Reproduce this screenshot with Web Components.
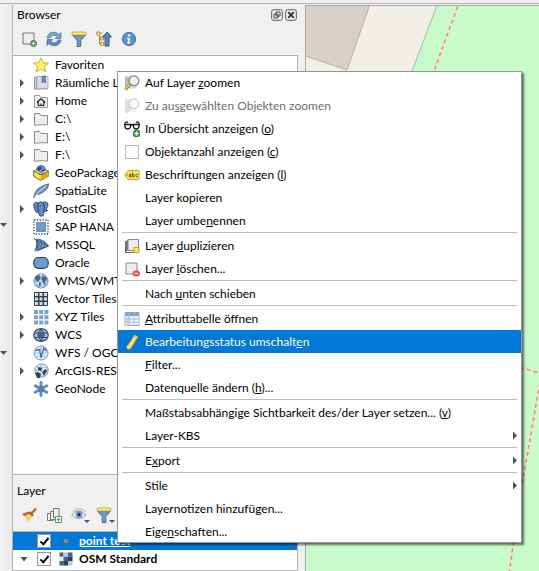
<!DOCTYPE html>
<html lang="de">
<head>
<meta charset="utf-8">
<title>QGIS – Layer-Kontextmenü</title>
<style>
  html, body { height: 100%; margin: 0; }
  body { font: 12px/18px Lato, "Open Sans", sans-serif; color: #000; background: #f0f0f0; overflow: hidden; }
</style>
</head>
<body>
<script>
const ICONS = {
  addLayer: '<path d="M2 2h11v11H2z" fill="#eee" stroke="#777"/><circle cx="12.500" cy="12.500" r="3" fill="#5b9b6a" stroke="#3f7d4e"/><path d="M12.500 10.700v3.600M10.700 12.500h3.600" stroke="#fff"/>',
  refresh: '<path d="M1 7C1.500 3 5 .8 8.500 1.300 10.500 1.500 12 2.500 13 3.500L15 1.500V7.500H9.200L11.200 5.400C8.500 3.200 5.200 4 4 7z" fill="#7ba8d3" stroke="#3e71a8" stroke-width=".7"/><path d="M15 9C14.500 13 11 15.200 7.500 14.700 5.500 14.500 4 13.500 3 12.500L1 14.500V8.500H6.800L4.800 10.600C7.500 12.800 10.800 12 12 9z" fill="#5b8dc3" stroke="#3e71a8" stroke-width=".7"/>',
  filter: '<path d="M1.500 4h13l-4.700 5.500v6H6.200v-6z" fill="#6d9acb" stroke="#466d98"/><rect x="1" y="1" width="14" height="3" rx="1" fill="#ffe95c" stroke="#b7a43c" stroke-width=".8"/>',
  collapse: '<path d="M2 2h4M3.500 2v11H6M3.500 7.500H6" stroke="#888" fill="none"/><path d="M.8 1h3v3h-3zM4.500 6h3v3h-3zM4.500 11.500h3v3h-3z" fill="#fbe0bd" stroke="#d98b2b"/><path d="M11 1l4.500 5H13v9H9V6H6.500z" fill="#5a87b8" stroke="#355f8e"/>',
  info: '<circle cx="8" cy="8" r="6.700" fill="#5c91c9" stroke="#4478ad"/><path d="M7 3.500h2.500L9 5.500H6.700zM6 7h3.200l-1 4.300h1.200l-.3 1.200H6.200l1-4.300H5.800z" fill="#fff"/>',
  star: '<path d="M8 .8l2.100 4.900 5.400.4-4.100 3.500 1.300 5.200L8 12l-4.700 2.800 1.300-5.200L.5 6.100l5.400-.4z" fill="#fff568" stroke="#d5ab20"/>',
  bookmark: '<path d="M1.500 2v12h1.800V2z" fill="#ddd" stroke="#999"/><path d="M4 1.500h11v12H4z" fill="#ddd" stroke="#b2b2b2"/><path d="M2 14h13" stroke="#aaa"/><path d="M9 1h3.500v7L10.700 6.500 9 8z" fill="#5d90c7" stroke="#3e6c9d" stroke-width=".6"/>',
  home: '<path d="M1.500 2.500h5l1.500 2h6.500v10h-13z" fill="#eee" stroke="#999"/><path d="M3.800 9.500L8 5.800l4.200 3.700M5.200 8.800v3.700h5.600V8.800M8 12.500v-2" fill="none" stroke="#222" stroke-width="1.200"/>',
  folder: '<path d="M1.500 2.500h5l1.500 2h6.500v9.500q-6.500-.8-13 .3z" fill="#eee" stroke="#8e8e8e"/>',
  geopackage: '<path d="M.7 6l7 3.500L15.300 6v5.300l-7.600 4.200-7-4.200z" fill="#ffe44c" stroke="#544a1a" stroke-width=".8"/><path d="M7.700 9.500v6l7.600-4.200V6z" fill="#d8a81d"/><circle cx="8" cy="5" r="4.500" fill="#6c9ccf" stroke="#294765" stroke-width=".8"/><path d="M4.500 3l3-1.500L9 3 7 5.500l-2-.5zM9 5l2-1 1 2-2 2z" fill="#27496c"/><path d="M.7 6l7 3.500 7.600-3.500-3-1-4.300 3-4.500-3z" fill="#fff1a0" stroke="#544a1a" stroke-width=".6"/>',
  feather: '<path d="M.7 15Q2 7 7 4.500 11 2 15.500.8 16 5 11 8.500 8 11 3.500 11.500z" fill="#6c9ccf" stroke="#304f70" stroke-width=".8"/><path d="M1 15Q5 8 13.500 2.500" fill="none" stroke="#dfeaf6" stroke-width=".9"/>',
  postgis: '<path d="M5 2Q1 0 .7 4 .8 9 3.500 11.500 5 12 5.500 10q0 4 1.500 5 3.500 1 3.800-2v-2.500Q12 11 14.800 9.500l-2-.5Q15.500 5 15 2.500 12-.5 9.500 1.300 7 0 5 2z" fill="#5f8fc2" stroke="#263f5a" stroke-width=".8"/><path d="M5 2.200Q4 7 5.500 10M10 1.500Q12.500 5 10.700 10.500M6.500 5h1M9 5h.8" fill="none" stroke="#263f5a"/>',
  saphana: '<path d="M3.500 3.500h9v9h-9z" fill="#6c9ccf" stroke="#42688f" stroke-width=".6"/><path d="M1 1h14v14H1z" fill="none" stroke="#2c445d" stroke-width="1.300" stroke-dasharray="1.300 1.500"/>',
  mssql: '<path d="M1 1.500Q5 5 1.500 13.500L4.500 12Q7 7 4.500 3z" fill="#456c96"/><path d="M4.500 2Q12 3 15.500 9L4 14Q7.500 8 4.500 2z" fill="#6c9ccf" stroke="#304f70" stroke-width=".7"/><path d="M1 1.500L15.500 9 1.500 14M7.500 3Q10 7 7.500 12M10.500 4Q12.500 7 10.500 11" fill="none" stroke="#304f70" stroke-width=".8"/>',
  oracle: '<rect x=".8" y="2.500" width="14.400" height="10.800" rx="4.500" fill="#6c9ccf" stroke="#2d4661" stroke-width="1.200"/>',
  globe: '<circle cx="8" cy="8" r="7" fill="#a6c4e4" stroke="#5d7da1"/><path d="M1.500 6.500Q8 9 14.500 6.500M1.500 10Q8 12 14.500 10M8 1Q3 8 8 15M8 1Q13 8 8 15" fill="none" stroke="#e5effa" stroke-width=".8"/><path d="M3 3l4-.6.5 3-2 3-2-.5L2 6zM6 9l2 1-.6 4-1.400-1zM9 3l4 1 1 3-2 1 .5 3-1.500 1-1.500-4-1-1z" fill="#43678f"/>',
  grid: '<path d="M1.500 1.500h13v13h-13z" fill="#fff" stroke="#2f3f50"/><path d="M2.500 2.500h3v3h-3zM6.700 2.500h3v3h-3zM11 2.500h3v3h-3zM2.500 6.700h3v3h-3zM6.700 6.700h3v3h-3zM11 6.700h3v3h-3zM2.500 11h3v3h-3zM6.700 11h3v3h-3zM11 11h3v3h-3z" fill="#cfdae6"/><path d="M5.800 1v14M10.200 1v14M1 5.800h14M1 10.200h14" stroke="#2f4052" stroke-width="1.500"/>',
  tiles: '<path d="M1 1h4v4H1zM6.200 1h4v4h-4zM11.400 1h4v4h-4zM1 6.200h4v4H1zM6.200 6.200h4v4h-4zM11.400 6.200h4v4h-4zM1 11.400h4v4H1zM6.200 11.400h4v4h-4zM11.400 11.400h4v4h-4z" fill="#78a4d3"/>',
  wcs: '<ellipse cx="8" cy="8" rx="7.200" ry="6.300" fill="#a6c4e4" stroke="#304a66" stroke-width="1.200"/><path d="M8 2v12M1 6h14M1 10.500h14M8 2Q2 8 8 14M8 2Q14 8 8 14" fill="none" stroke="#304a66"/><path d="M4.500 6h7v4.500h-7z" fill="#3e648e"/>',
  wfs: '<circle cx="8" cy="8" r="7" fill="#e3edf8" stroke="#7896b6"/><path d="M8 1v14M1 8h14M2.500 4Q8 6 13.500 4M2.500 12Q8 10 13.500 12" fill="none" stroke="#9db8d5" stroke-width=".8"/><path d="M2.500 5.500l4-1 1.500 8 3-9.500 2.500 3" fill="none" stroke="#4a6f98" stroke-width="1.300"/>',
  arcgis: '<circle cx="8.500" cy="7.500" r="6.700" fill="#dce8f5" stroke="#7896b6"/><path d="M8 1v13M2 7.500h13M3.500 4Q9 6 14 4" fill="none" stroke="#9db8d5" stroke-width=".8"/><path d="M2 10l3-1 3 2-1 4H4zM5 4l4 1-1 3-3-1zM9 9l4-3 1 2-3 5z" fill="#2d4258"/>',
  geonode: '<path d="M8 1.500v13M2.200 4.700l11.600 6.600M13.800 4.700L2.200 11.300" stroke="#5f8dbf" stroke-width="3" stroke-linecap="round"/><circle cx="8" cy="8" r="3" fill="#4f7eb0"/>',
  brush: '<path d="M1 7l8-2 3 3.500-4.500 6Q5 11 1 7z" fill="#f5c24e"/><path d="M1 7l7-2.500 1.500 1.700L3.500 9z" fill="#e24f3e"/><path d="M7.500 14.500L3.500 9 10 6.500l1.500 2z" fill="#f3d36b"/><path d="M8.500 5l3.500 4M10.500 6.500L15 1.500" stroke="#a5672b" stroke-width="2.200"/>',
  addGroup: '<path d="M1.500 6.500h6v7h-6z" fill="#eee" stroke="#777"/><path d="M4.500 4.500h6v8h-6z" fill="#eee" stroke="#777"/><path d="M7.500 1.500H13v9H7.500z" fill="#eee" stroke="#777"/><path d="M9.500 9.500h6v6h-6z" fill="#e8f6e8" stroke="#5b9b6a"/><path d="M12.500 11v3M11 12.500h3" stroke="#5b9b6a"/>',
  eye: '<path d="M.7 8Q7-.5 15 8 8 15 .7 8z" fill="#f6f6f6" stroke="#999"/><circle cx="8" cy="7.500" r="3.500" fill="#6d9acb"/><circle cx="8" cy="7.500" r="1.500" fill="#1c2d40"/><path d="M1.500 4.500Q8-1 14.500 4.500" fill="none" stroke="#b2b2b2"/>',
  zoom: '<path d="M1 1l4 1v11l-4-1.500z" fill="#bbb"/><path d="M5 1h7v12H5z" fill="#e6e6e6" stroke="#c0c0c0" stroke-width=".7"/><path d="M6.500 9L1.500 14.500" stroke="#9b7a2e" stroke-width="3"/><path d="M6 9.300L1.700 14" stroke="#edcf66" stroke-width="1.400"/><circle cx="10" cy="5.800" r="4.900" fill="#f5f5f5" fill-opacity=".75" stroke="#858585" stroke-width="1.200"/>',
  glasses: '<path d="M.5 3Q2-.3 4 1.500M15.500 3Q14-.3 12 1.500M6.500 4.500Q8 3 9.500 4.500" fill="none" stroke="#111" stroke-width="1.200"/><path d="M.8 3.500h5.900q0 4.500-3 4.500T.8 3.500zM9.300 3.500h5.900q0 4.500-3 4.500t-2.900-4.500z" fill="#fff" stroke="#111" stroke-width="1.300"/><rect x="9.500" y="9.500" width="6" height="6" rx="1.500" fill="#5b9b6a" stroke="#3f7d4e"/><path d="M12.500 10.500v4M10.500 12.500h4" stroke="#fff" stroke-width="1.200"/>',
  label: '<path d="M4 3.500h10q1.200 0 1.200 1.200v6.600q0 1.200-1.200 1.200H4L.8 8z" fill="#fbe562" stroke="#c9a41c"/><circle cx="3.200" cy="8" r=".8" fill="#8c7419"/><path d="M5 7.300q2-.8 2 .7v2q-2 .5-2-.8T7 8.300M8.500 5.500v4.300q2 .6 2-1.200T8.500 7.700M13.800 7.300q-2-.6-2 1.200t2 1.200" fill="none" stroke="#5a4b18" stroke-width=".9"/>',
  duplicate: '<path d="M1.500 3.500L4 1.500v11l-2.500 2z" fill="#777"/><path d="M1.500 3.500v11H12" stroke="#666"/><path d="M4 1.500h10.500v11H4z" fill="#eee" stroke="#888"/><path d="M10 9.500h5v5h-5z" fill="#fce468" stroke="#c4a12a"/>',
  remove: '<path d="M2 2h11v11H2z" fill="#eee" stroke="#888"/><rect x="9" y="10" width="6.500" height="5" rx="2" fill="#df4d4d" stroke="#c43a3a" stroke-width=".6"/><path d="M10.500 12.500h3.500" stroke="#fff" stroke-width="1.300"/>',
  table: '<path d="M1 1.500h14v13H1z" fill="#f3f7fb" stroke="#8da9c6"/><path d="M1.500 2h13v3h-13z" fill="#7ba3cf"/><path d="M1.500 5.500h3.500v9H1.500z" fill="#cbdcee"/><path d="M5.200 2v12M10 2v12M2 8h12M2 11h12" stroke="#a9bfd6"/>',
  pencil: '<path d="M3 12L10.500 1l3.500 2-7 11.500-4.500 1.300z" fill="#f5d94c" stroke="#a08628" stroke-width=".8"/><path d="M5 13L12.200 2" stroke="#fff2a0"/><path d="M10.500 1l3.500 2-.8 1.500L9.500 2.500z" fill="#e9b3a0"/><path d="M3 12l3.700 2.300-4.200 1.500z" fill="#e9dcc0"/><path d="M2.600 14l1.300 1.300-1.700.6z" fill="#222"/>',
  point: '<circle cx="8" cy="8" r="3" fill="#6b8ba4" stroke="#3d6486"/>',
  raster: '<path d="M1.500 1.500h13v13h-13z" fill="#e6eef5"/><path d="M1.500 1.500h4v4h-4zM10 1.500h4.500v4H10zM5.500 5.500H10V10H5.500zM1.500 10h4v4.500h-4z" fill="#41658a"/><path d="M10 5.500h4.500V10H10zM5.500 10H10v4.500H5.500z" fill="#24405e"/><path d="M5.500 1.500H10v4H5.500zM10 10h4.500v4.500H10z" fill="#b6cbdd"/>',
  float: '<rect x=".7" y=".7" width="10.600" height="10.600" rx="2" fill="#f4f4f4" stroke="#555"/><path d="M5 3h4v4H5zM3 5h4v4H3z" fill="#f4f4f4" stroke="#444"/>',
  close: '<rect x=".7" y=".7" width="10.600" height="10.600" rx="2" fill="#f4f4f4" stroke="#555"/><path d="M3.200 3.200l5.600 5.600M8.800 3.200L3.200 8.800" stroke="#333" stroke-width="1.900"/>',
};
const SMALL = new Set(['float', 'close']);

class UiIcon extends HTMLElement {
  connectedCallback() {
    const name = this.getAttribute('name');
    const box = SMALL.has(name) ? 12 : 16;
    this.attachShadow({ mode: 'open' }).innerHTML = `
      <style>:host{display:block;flex:none;width:${box}px;height:${box}px} svg{display:block;width:100%;height:100%}</style>
      <svg viewBox="0 0 ${box} ${box}" fill="none" aria-hidden="true">${ICONS[name] || ''}</svg>`;
  }
}
customElements.define('ui-icon', UiIcon);

class ToolButton extends HTMLElement {
  connectedCallback() {
    const menu = this.hasAttribute('menu') ? '<i></i>' : '';
    this.attachShadow({ mode: 'open' }).innerHTML = `
      <style>
        :host{display:block;flex:none}
        button{display:block;position:relative;padding:0;border:0;background:none}
        i{position:absolute;right:-3px;bottom:0;border:3px solid transparent;border-top-color:#555;border-bottom:0}
      </style>
      <button type="button" aria-label="${this.getAttribute('label')}"><ui-icon name="${this.getAttribute('icon')}"></ui-icon>${menu}</button>`;
  }
}
customElements.define('tool-button', ToolButton);

class DockPanel extends HTMLElement {
  connectedCallback() {
    this.attachShadow({ mode: 'open' }).innerHTML = `
      <style>
        :host{display:flex;flex-direction:column;min-height:0}
        header{display:flex;align-items:center;gap:2px;padding:0 1px 0 4px;height:20px}
        h2{flex:1;margin:0;font:inherit}
        .tools{display:flex;align-items:center;gap:9px;padding:0 8px 2px;height:28px}
        .body{flex:1;min-height:0;background:#fff;border:1px solid #b4b4b4;border-left:0;overflow:hidden}
      </style>
      <header><h2>${this.getAttribute('heading')}</h2><slot name="controls"></slot></header>
      <div class="tools" role="toolbar"><slot name="tools"></slot></div>
      <div class="body"><slot></slot></div>`;
  }
}
customElements.define('dock-panel', DockPanel);

class TreeRow extends HTMLElement {
  connectedCallback() {
    this.setAttribute('role', 'treeitem');
    this.attachShadow({ mode: 'open' }).innerHTML = `
      <style>
        :host{display:flex;align-items:center;height:18px;padding-left:7px;white-space:nowrap}
        .arrow{flex:none;width:4px;height:8px;margin-right:9px}
        :host([expandable]) .arrow{background:#505050;clip-path:polygon(0 0,100% 50%,0 100%)}
        ui-icon{margin-right:6px}
      </style>
      <span class="arrow"></span><ui-icon name="${this.getAttribute('icon')}"></ui-icon><slot></slot>`;
  }
}
customElements.define('tree-row', TreeRow);

class LayerRow extends HTMLElement {
  connectedCallback() {
    this.setAttribute('role', 'treeitem');
    this.attachShadow({ mode: 'open' }).innerHTML = `
      <style>
        :host{display:flex;align-items:center;height:18px;padding-left:7px;white-space:nowrap;font-weight:bold}
        :host([selected]){background:#0078d7;color:#fff;text-decoration:underline}
        .arrow{flex:none;width:8px;height:5px;margin-right:9px}
        :host([open]) .arrow{background:#505050;clip-path:polygon(0 0,100% 0,50% 100%)}
        label{display:flex;align-items:center}
        input{appearance:none;box-sizing:border-box;display:grid;place-items:center;width:14px;height:14px;margin:0 7px 0 0;background:#fff;border:1px solid #999}
        input:checked::before{content:"";width:3px;height:7px;margin-bottom:2px;border:solid #000;border-width:0 2px 2px 0;transform:rotate(40deg)}
        ui-icon{margin-right:5px}
      </style>
      <span class="arrow"></span>
      <label><input type="checkbox" checked><ui-icon name="${this.getAttribute('icon')}"></ui-icon><slot></slot></label>`;
  }
}
customElements.define('layer-row', LayerRow);

class ContextMenu extends HTMLElement {
  connectedCallback() {
    this.setAttribute('role', 'menu');
    this.attachShadow({ mode: 'open' }).innerHTML = `
      <style>
        :host{display:block;box-sizing:border-box;background:#fff;border:solid #969696;border-width:0 1px;
          box-shadow:inset 0 1px #969696,inset 0 -1px #969696,2px 2px 2px rgba(0,0,0,.55)}
      </style><slot></slot>`;
  }
}
customElements.define('context-menu', ContextMenu);

class MenuItem extends HTMLElement {
  connectedCallback() {
    const off = this.hasAttribute('disabled') ? 'disabled' : '';
    const check = this.hasAttribute('checkable');
    const icon = this.getAttribute('icon');
    const lead = check ? '<input type="checkbox">' : icon ? `<ui-icon name="${icon}"></ui-icon>` : '';
    const inner = `<span class="lead">${lead}</span><span class="text"><slot></slot></span>${this.hasAttribute('submenu') ? '<span class="sub"></span>' : ''}`;
    this.attachShadow({ mode: 'open' }).innerHTML = `
      <style>
        :host{display:block}
        button,label{display:flex;align-items:center;box-sizing:border-box;width:100%;height:23px;padding:0 4px 0 6px;border:0;background:none;
          font:inherit;color:inherit;text-align:left;white-space:nowrap}
        button:disabled{color:#6d6d6d}
        button:disabled ui-icon{opacity:.4;filter:grayscale(1)}
        :host([active]) button{background:#0078d7;color:#fff}
        .lead{flex:none;width:21px}
        .text{flex:1}
        .sub{width:4px;height:8px;background:#505050;clip-path:polygon(0 0,100% 50%,0 100%)}
        input{appearance:none;display:block;box-sizing:border-box;width:14px;height:14px;margin:0 1px;background:#fff;border:1px solid #b4b4b4}
      </style>
      ${check ? `<label>${inner}</label>` : `<button type="button" role="menuitem" ${off}>${inner}</button>`}`;
  }
}
customElements.define('menu-item', MenuItem);

class MenuSeparator extends HTMLElement {
  connectedCallback() {
    this.setAttribute('role', 'separator');
    this.attachShadow({ mode: 'open' }).innerHTML =
      '<style>:host{display:block;height:1px;margin:0 4px 1px;background:#bdbdbd}</style>';
  }
}
customElements.define('menu-separator', MenuSeparator);

class MapCanvas extends HTMLElement {
  connectedCallback() {
    this.attachShadow({ mode: 'open' }).innerHTML = `
      <style>:host{display:block;min-width:0;min-height:0;overflow:hidden;border:solid #a8a8a8;border-width:1px 0 0 1px} svg{display:block;width:100%;height:100%}</style>
      <svg viewBox="306 6 233 565" preserveAspectRatio="xMinYMin slice" role="img" aria-label="Karte">
        <path d="M300 0h240v572H300z" fill="#f2efe9"/>
        <path d="M300 0h71.500L347 70 300 54z" fill="#d9d0c9" stroke="#bcb1a6"/>
        <path d="M439 0L300 366V572H540V0z" fill="#c8facc" stroke="#9cc3a0"/>
        <g fill="none" stroke="#fbe3d8" stroke-width="2" opacity=".7"><path d="M460 0L434 71M480 354l60 19.500M541 376L523 480 513 545 509 575"/></g>
        <g fill="none" stroke="#f4877b" stroke-width="1.500" stroke-dasharray="4 3"><path d="M460 0L434 71"/><path d="M480 354l60 19.500"/><path d="M541 376L523 480 513 545 509 575"/></g>
      </svg>`;
  }
}
customElements.define('map-canvas', MapCanvas);

class QgisWindow extends HTMLElement {
  connectedCallback() {
    this.attachShadow({ mode: 'open' }).innerHTML = `
      <style>
        :host{display:flex;flex-direction:column;position:relative;height:100%;overflow:hidden}
        .edge{flex:none;height:1px;margin:3px 0 1px;background:#b4b4b4}
        .work{flex:1;min-height:0;display:grid;grid-template-columns:12px minmax(0,286px) minmax(0,1fr);grid-template-rows:minmax(0,1fr)}
        .strip{display:flex;flex-direction:column;gap:124px;padding-top:218px;background:linear-gradient(90deg,#f2f2f2,#eaeaea)}
        .strip button{width:7px;height:4px;padding:0;border:0;background:#505050;clip-path:polygon(0 0,100% 0,50% 100%)}
        .dock{display:flex;flex-direction:column;gap:6px;min-height:0;border-left:1px solid #b4b4b4}
        .browser{flex:1}
        .layers{flex:none;height:90px}
        map-canvas{margin-left:7px}
        context-menu{position:absolute;left:117px;top:71px;width:405px}
      </style>
      <div class="edge"></div>
      <div class="work">
        <nav class="strip"><button type="button" aria-label="Weitere Werkzeuge"></button><button type="button" aria-label="Weitere Ansichten"></button></nav>
        <div class="dock">
          <dock-panel class="browser" heading="Browser">
            <tool-button slot="controls" icon="float" label="Abdocken"></tool-button>
            <tool-button slot="controls" icon="close" label="Schließen"></tool-button>
            <tool-button slot="tools" icon="addLayer" label="Layer hinzufügen"></tool-button>
            <tool-button slot="tools" icon="refresh" label="Aktualisieren"></tool-button>
            <tool-button slot="tools" icon="filter" label="Filter"></tool-button>
            <tool-button slot="tools" icon="collapse" label="Alles einklappen"></tool-button>
            <tool-button slot="tools" icon="info" label="Eigenschaften"></tool-button>
            <div role="tree" aria-label="Browser">
              <tree-row icon="star">Favoriten</tree-row>
              <tree-row icon="bookmark" expandable>Räumliche L</tree-row>
              <tree-row icon="home" expandable>Home</tree-row>
              <tree-row icon="folder" expandable>C:\\</tree-row>
              <tree-row icon="folder" expandable>E:\\</tree-row>
              <tree-row icon="folder" expandable>F:\\</tree-row>
              <tree-row icon="geopackage">GeoPackage</tree-row>
              <tree-row icon="feather">SpatiaLite</tree-row>
              <tree-row icon="postgis" expandable>PostGIS</tree-row>
              <tree-row icon="saphana">SAP HANA</tree-row>
              <tree-row icon="mssql">MSSQL</tree-row>
              <tree-row icon="oracle">Oracle</tree-row>
              <tree-row icon="globe" expandable>WMS/WMTS</tree-row>
              <tree-row icon="grid">Vector Tiles</tree-row>
              <tree-row icon="tiles" expandable>XYZ Tiles</tree-row>
              <tree-row icon="wcs" expandable>WCS</tree-row>
              <tree-row icon="wfs">WFS / OGC</tree-row>
              <tree-row icon="arcgis" expandable>ArcGIS-REST</tree-row>
              <tree-row icon="geonode">GeoNode</tree-row>
            </div>
          </dock-panel>
          <dock-panel class="layers" heading="Layer">
            <tool-button slot="tools" icon="brush" label="Gestaltung"></tool-button>
            <tool-button slot="tools" icon="addGroup" label="Gruppe hinzufügen"></tool-button>
            <tool-button slot="tools" icon="eye" label="Sichtbarkeit" menu></tool-button>
            <tool-button slot="tools" icon="filter" label="Legende filtern" menu></tool-button>
            <div role="tree" aria-label="Layer">
              <layer-row icon="point" selected>point test</layer-row>
              <layer-row icon="raster" open>OSM Standard</layer-row>
            </div>
          </dock-panel>
        </div>
        <map-canvas></map-canvas>
      </div>
      <context-menu>
        <menu-item icon="zoom">Auf Layer <u>z</u>oomen</menu-item>
        <menu-item icon="zoom" disabled>Zu au<u>s</u>gewählten Objekten zoomen</menu-item>
        <menu-item icon="glasses">In Übersicht anzeigen (<u>o</u>)</menu-item>
        <menu-item checkable>Objektanzahl anzeigen (<u>c</u>)</menu-item>
        <menu-item icon="label">Beschriftungen anzeigen (<u>l</u>)</menu-item>
        <menu-item>Layer kopieren</menu-item>
        <menu-item>Layer umbe<u>n</u>ennen</menu-item>
        <menu-separator></menu-separator>
        <menu-item icon="duplicate">Layer <u>d</u>uplizieren</menu-item>
        <menu-item icon="remove">Layer <u>l</u>öschen...</menu-item>
        <menu-separator></menu-separator>
        <menu-item>Nach <u>u</u>nten schieben</menu-item>
        <menu-separator></menu-separator>
        <menu-item icon="table"><u>A</u>ttributtabelle öffnen</menu-item>
        <menu-item icon="pencil" active>Bearbeitungsstatus umschalt<u>e</u>n</menu-item>
        <menu-item><u>F</u>ilter...</menu-item>
        <menu-item>Datenquelle ändern (<u>h</u>)...</menu-item>
        <menu-separator></menu-separator>
        <menu-item>Maßstabsabhängige Sichtbarkeit des/der Layer setzen... (<u>v</u>)</menu-item>
        <menu-item submenu>Layer-KBS</menu-item>
        <menu-separator></menu-separator>
        <menu-item submenu>E<u>x</u>port</menu-item>
        <menu-separator></menu-separator>
        <menu-item submenu>Stile</menu-item>
        <menu-item>Layernotizen hinzufügen...</menu-item>
        <menu-item>Eige<u>n</u>schaften...</menu-item>
      </context-menu>`;
  }
}
customElements.define('qgis-window', QgisWindow);
</script>
<qgis-window></qgis-window>
</body>
</html>
